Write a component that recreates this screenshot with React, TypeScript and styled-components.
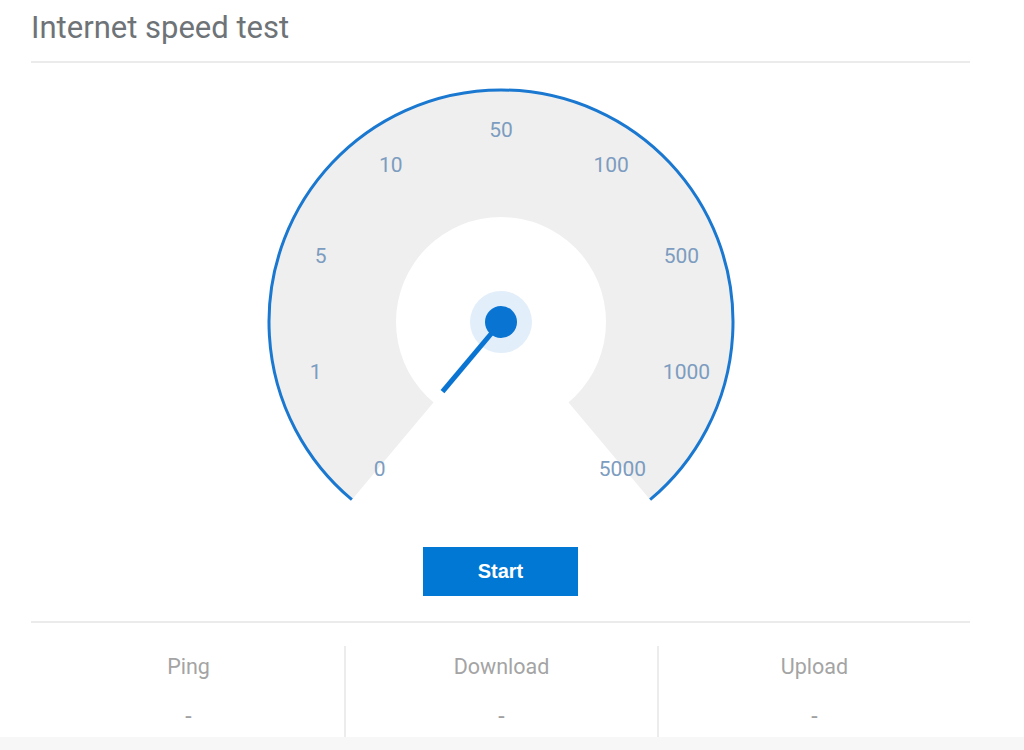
import styled, { createGlobalStyle } from 'styled-components';

const GlobalStyle = createGlobalStyle`
  html, body {
    margin: 0;
    padding: 0;
    background: #f7f7f7;
  }
  body {
    font-family: Roboto, 'Noto Sans', sans-serif;
  }
`;

const Page = styled.div`
  width: 1024px;
  height: 737px;
  background: #ffffff;
  overflow: hidden;
`;

const Panel = styled.div`
  width: 939px;
  margin-left: 31px;
`;

const Header = styled.div`
  height: 63px;
  box-sizing: border-box;
  border-bottom: 2px solid #ebebeb;
  display: flex;
  align-items: flex-start;
`;

const Title = styled.h1`
  margin: 8px 0 0 0;
  font-size: 31px;
  font-weight: 400;
  line-height: 40px;
  color: #6e7377;
`;

const GaugeArea = styled.div`
  display: flex;
  flex-direction: column;
  align-items: center;
  padding-top: 25px;
  height: 560px;
  box-sizing: border-box;
  border-bottom: 2px solid #ebebeb;
`;

const StartButton = styled.button`
  margin-top: 35px;
  width: 155px;
  height: 49px;
  border: none;
  border-radius: 0;
  background: #0078d4;
  color: #ffffff;
  font-family: 'Liberation Sans', Arial, sans-serif;
  font-weight: bold;
  font-size: 20px;
  cursor: pointer;
`;

const Stats = styled.div`
  display: grid;
  grid-template-columns: repeat(3, 1fr);
  padding-top: 23px;
`;

const Stat = styled.div<{ divider?: boolean }>`
  display: flex;
  flex-direction: column;
  align-items: center;
  height: 94px;
  border-left: ${(p) => (p.divider ? '2px solid #ececec' : '2px solid transparent')};
`;

const StatLabel = styled.div`
  margin-top: 9px;
  font-size: 21.5px;
  color: #a4a4a4;
  line-height: 24px;
`;

const StatValue = styled.div`
  margin-top: 24px;
  font-size: 23px;
  color: #a0a0a0;
  line-height: 28px;
`;

const LABELS = ['0', '1', '5', '10', '50', '100', '500', '1000', '5000'];

const polar = (cx: number, cy: number, r: number, deg: number) => {
  const a = (deg * Math.PI) / 180;
  return { x: cx + r * Math.sin(a), y: cy - r * Math.cos(a) };
};

const Gauge = () => {
  const cx = 235;
  const cy = 234;
  const r = 232;
  const start = polar(cx, cy, r, -140);
  const end = polar(cx, cy, r, 140);
  const tip = polar(cx, cy, 91, -140);

  return (
    <svg width="470" height="424" viewBox="0 0 470 424">
      <path
        d={`M ${cx} ${cy} L ${start.x} ${start.y} A ${r} ${r} 0 1 1 ${end.x} ${end.y} Z`}
        fill="#efefef"
      />
      <circle cx={cx} cy={cy} r={105} fill="#ffffff" />
      <path
        d={`M ${start.x} ${start.y} A ${r} ${r} 0 1 1 ${end.x} ${end.y}`}
        fill="none"
        stroke="#1a78d0"
        strokeWidth={3}
      />
      {LABELS.map((label, i) => {
        const p = polar(cx, cy, 192, -140 + i * 35);
        return (
          <text
            key={label}
            x={p.x + (i === 0 ? 2 : i === 8 ? -2 : 0)}
            y={p.y}
            textAnchor="middle"
            dominantBaseline="central"
            fontFamily="Roboto, sans-serif"
            fontSize="21"
            fill="#7c9cc0"
          >
            {label}
          </text>
        );
      })}
      <circle cx={cx} cy={cy} r={31} fill="#e2eefa" />
      <line
        x1={cx}
        y1={cy}
        x2={tip.x}
        y2={tip.y}
        stroke="#0a74d2"
        strokeWidth={5}
      />
      <circle cx={cx} cy={cy} r={16} fill="#0a74d2" />
    </svg>
  );
};

const App = () => {
  return (
    <Page>
      <GlobalStyle />
      <Panel>
        <Header>
          <Title>Internet speed test</Title>
        </Header>
        <GaugeArea>
          <Gauge />
          <StartButton>Start</StartButton>
        </GaugeArea>
        <Stats>
          <Stat>
            <StatLabel>Ping</StatLabel>
            <StatValue>-</StatValue>
          </Stat>
          <Stat divider>
            <StatLabel>Download</StatLabel>
            <StatValue>-</StatValue>
          </Stat>
          <Stat divider>
            <StatLabel>Upload</StatLabel>
            <StatValue>-</StatValue>
          </Stat>
        </Stats>
      </Panel>
    </Page>
  );
};

export default App;
